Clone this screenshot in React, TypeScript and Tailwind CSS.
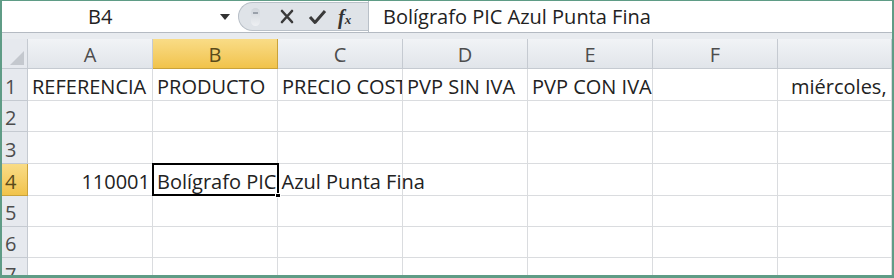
import React from "react";

const colLetters = ["A", "B", "C", "D", "E", "F", ""];
const font = { fontFamily: '"Open Sans", "Noto Sans", sans-serif' };

function HeaderCell({ label, active, last }: { label: string; active?: boolean; last?: boolean }) {
  return (
    <div
      className={`${last ? "flex-1" : "w-[125px]"} h-full flex items-center justify-center pt-[3px] border-r border-b ${
        active
          ? "bg-gradient-to-b from-[#f9dc86] to-[#f1c34a] border-[#c9a23a] text-[#5a4a1a]"
          : "bg-gradient-to-b from-[#f1f3f6] to-[#e1e5ea] border-[#c5cad1] text-[#4d4d4d]"
      } text-[20px]`}
    >
      {label}
    </div>
  );
}

function RowHeader({ n, active, h }: { n: number; active?: boolean; h: string }) {
  return (
    <div
      className={`w-[26px] ${h} shrink-0 flex items-center pl-[3px] pt-[4px] border-r border-b text-[20px] leading-none ${
        active
          ? "bg-gradient-to-b from-[#f9dc86] to-[#f1c34a] border-[#c9a23a] text-[#5a4a1a]"
          : "bg-[#e6e9ee] border-[#c5cad1] text-[#4d4d4d]"
      }`}
    >
      {n}
    </div>
  );
}

function Cell({ children, last, className = "" }: { children?: React.ReactNode; last?: boolean; className?: string }) {
  return (
    <div
      className={`${last ? "flex-1" : "w-[125px]"} shrink-0 h-full border-r border-b border-[#dadcdf] relative text-[20px] text-[#222] whitespace-nowrap ${className}`}
    >
      {children}
    </div>
  );
}

export default function App() {
  const rowHeights = ["h-[32px]", "h-[31px]", "h-[32px]", "h-[32px]", "h-[31px]", "h-[31px]", "h-[31px]"];
  return (
    <div
      className="w-[894px] h-[278px] overflow-hidden bg-[#e8ebef] border-l-2 border-t border-r-2 border-b-[3px] border-[#5f9c86] flex flex-col"
      style={font}
    >
      {/* formula bar */}
      <div className="h-[32px] shrink-0 flex bg-white border-b border-[#b4bac2]">
        <div className="w-[236px] shrink-0 flex items-center relative">
          <span className="absolute left-[86px] text-[20px] text-[#222]">B4</span>
          <svg className="absolute left-[218px] top-[13px]" width="10" height="6" viewBox="0 0 10 6">
            <path d="M0 0 L10 0 L5 6 Z" fill="#333" />
          </svg>
        </div>
        <div className="w-[130px] shrink-0 bg-[#dfe3e8] rounded-l-[16px] border-l border-t border-b border-[#b9c0c8] flex items-center mt-[1px] mb-[1px]">
          <div className="ml-[12px] w-[9px] h-[18px] rounded-full bg-gradient-to-b from-[#cfd4da] to-[#eef0f3] flex items-start justify-center pt-[4px]">
            <div className="w-[5px] h-[2px] bg-[#9aa1aa]" />
          </div>
          <svg className="ml-[20px]" width="14" height="15" viewBox="0 0 14 15">
            <path d="M2 2 L12 13 M12 2 L2 13" stroke="#3a3a3a" strokeWidth="2.6" strokeLinecap="round" />
          </svg>
          <svg className="ml-[14px]" width="19" height="16" viewBox="0 0 19 16">
            <path d="M2 8 L7 13.5 L17 2" stroke="#3a3a3a" strokeWidth="3" fill="none" strokeLinejoin="round" />
          </svg>
          <span
            className="ml-[11px] text-[20px] italic font-bold text-[#333] leading-none"
            style={{ fontFamily: '"Liberation Serif", serif' }}
          >
            f<span className="text-[13px]">x</span>
          </span>
        </div>
        <div className="flex-1 flex items-center pl-[14px] border-l border-[#b9c0c8] text-[20px] text-[#222] whitespace-nowrap">
          Bolígrafo PIC Azul Punta Fina
        </div>
      </div>
      <div className="h-[6px] shrink-0" />
      {/* grid */}
      <div className="flex-1 flex flex-col bg-white">
        <div className="h-[30px] shrink-0 flex">
          <div className="w-[26px] shrink-0 h-full bg-[#e6e9ee] border-r border-b border-[#c5cad1] relative">
            <svg className="absolute right-[3px] bottom-[3px]" width="14" height="14" viewBox="0 0 14 14">
              <path d="M14 0 L14 14 L0 14 Z" fill="#c4c8ce" />
            </svg>
          </div>
          {colLetters.map((c, i) => (
            <HeaderCell key={i} label={c} active={c === "B"} last={i === colLetters.length - 1} />
          ))}
        </div>
        {rowHeights.map((h, r) => {
          const n = r + 1;
          return (
            <div key={n} className={`${h} shrink-0 flex`}>
              <RowHeader n={n} active={n === 4} h={h} />
              {colLetters.map((_, i) => {
                const last = i === colLetters.length - 1;
                let content: React.ReactNode = null;
                let cls = "";
                if (n === 1) {
                  const texts = ["REFERENCIA", "PRODUCTO", "PRECIO COSTE", "PVP SIN IVA", "PVP CON IVA", "", "miércoles, 1"];
                  if (texts[i]) {
                    content = (
                      <span className={`absolute inset-y-0 pt-[4px] flex items-center ${last ? "left-[13px]" : "left-[4px]"}`}>
                        {texts[i]}
                      </span>
                    );
                    cls = "overflow-hidden";
                  }
                }
                if (n === 4 && i === 0) {
                  content = <span className="absolute inset-y-0 pt-[4px] right-[2px] flex items-center">110001</span>;
                }
                if (n === 4 && i === 1) {
                  content = (
                    <>
                      <span className="absolute inset-y-0 pt-[4px] left-[4px] flex items-center z-10">Bolígrafo PIC Azul Punta Fina</span>
                      <div className="absolute left-[-1px] top-[-1px] w-[127px] h-[33px] border-2 border-black z-20" />
                      <div className="absolute left-[122px] top-[29px] w-[6px] h-[5px] bg-black border border-white z-30" />
                    </>
                  );
                }
                return (
                  <Cell key={i} last={last} className={cls}>
                    {content}
                  </Cell>
                );
              })}
            </div>
          );
        })}
      </div>
    </div>
  );
}
